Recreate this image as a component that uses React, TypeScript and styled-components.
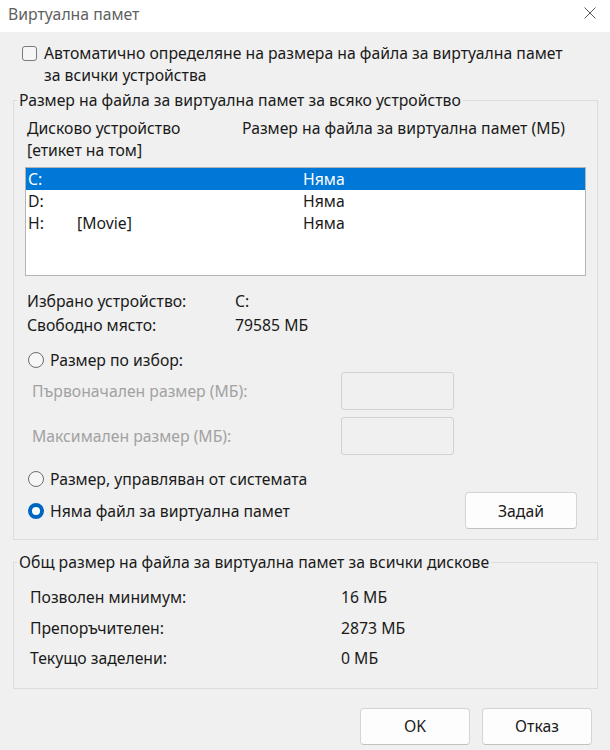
import styled, { createGlobalStyle } from "styled-components"

const GlobalStyle = createGlobalStyle`
  html, body {
    margin: 0;
    padding: 0;
    background: #f0f0f0;
  }
  body {
    font-family: "Segoe UI", "Noto Sans", "Open Sans", sans-serif;
  }
`

const drives = [
    { letter: "C:", label: "", size: "Няма" },
    { letter: "D:", label: "", size: "Няма" },
    { letter: "H:", label: "[Movie]", size: "Няма" },
]

const totals = [
    { name: "Позволен минимум:", value: "16 МБ" },
    { name: "Препоръчителен:", value: "2873 МБ" },
    { name: "Текущо заделени:", value: "0 МБ" },
]

const App = () => {
    return (
        <Window>
            <GlobalStyle />

            <TitleBar>
                <span>Виртуална памет</span>
                <CloseIcon width="12" height="12" viewBox="0 0 12 12">
                    <path d="M0.5 0.5 L11.5 11.5 M11.5 0.5 L0.5 11.5" stroke="#5a5a5a" strokeWidth="1" fill="none" />
                </CloseIcon>
            </TitleBar>

            <Content>
                <AutoRow>
                    <CheckBox />
                    <AutoText>
                        Автоматично определяне на размера на файла за виртуална памет
                        <br />
                        за всички устройства
                    </AutoText>
                </AutoRow>

                <Group>
                    <Legend>Размер на файла за виртуална памет за всяко устройство</Legend>

                    <Headers>
                        <span>
                            Дисково устройство
                            <br />
                            [етикет на том]
                        </span>
                        <span>Размер на файла за виртуална памет (МБ)</span>
                    </Headers>

                    <ListBox>
                        {drives.map((d, i) => (
                            <DriveRow key={d.letter} $selected={i === 0}>
                                <span>{d.letter}</span>
                                <span>{d.label}</span>
                                <span>{d.size}</span>
                            </DriveRow>
                        ))}
                    </ListBox>

                    <InfoList>
                        <InfoRow>
                            <span>Избрано устройство:</span>
                            <span>C:</span>
                        </InfoRow>
                        <InfoRow>
                            <span>Свободно място:</span>
                            <span>79585 МБ</span>
                        </InfoRow>
                    </InfoList>

                    <RadioRow $top={12}>
                        <Radio />
                        <span>Размер по избор:</span>
                    </RadioRow>

                    <SizeRow $top={1}>
                        <DisabledLabel>Първоначален размер (МБ):</DisabledLabel>
                        <SizeInput disabled />
                    </SizeRow>
                    <SizeRow $top={7}>
                        <DisabledLabel>Максимален размер (МБ):</DisabledLabel>
                        <SizeInput disabled />
                    </SizeRow>

                    <RadioRow $top={13}>
                        <Radio />
                        <span>Размер, управляван от системата</span>
                    </RadioRow>

                    <SetRow>
                        <RadioRow $top={0}>
                            <Radio $checked />
                            <span>Няма файл за виртуална памет</span>
                        </RadioRow>
                        <Button $width={112}>Задай</Button>
                    </SetRow>
                </Group>

                <TotalsGroup>
                    <Legend>Общ размер на файла за виртуална памет за всички дискове</Legend>
                    <TotalsList>
                        {totals.map((t) => (
                            <TotalRow key={t.name}>
                                <span>{t.name}</span>
                                <span>{t.value}</span>
                            </TotalRow>
                        ))}
                    </TotalsList>
                </TotalsGroup>

                <Footer>
                    <Button $width={110}>OK</Button>
                    <Button $width={110}>Отказ</Button>
                </Footer>
            </Content>
        </Window>
    )
}

const Window = styled.div`
    width: 610px;
    height: 750px;
    background: #f0f0f0;
    display: flex;
    flex-direction: column;
    font-size: 15.75px;
    line-height: 22px;
    color: #1a1a1a;
    overflow: hidden;
`

const TitleBar = styled.div`
    height: 32px;
    flex-shrink: 0;
    background: #ffffff;
    display: flex;
    align-items: flex-start;
    justify-content: space-between;
    box-sizing: border-box;
    padding: 3px 14px 0 8px;
    color: #5f5f5f;
`

const CloseIcon = styled.svg`
    margin-top: 4px;
`

const Content = styled.div`
    display: flex;
    flex-direction: column;
    padding: 0 12px 0 13px;
`

const AutoRow = styled.div`
    display: flex;
    align-items: flex-start;
    margin-top: 10px;
    padding-left: 9px;
`

const CheckBox = styled.span`
    width: 15px;
    height: 15px;
    box-sizing: border-box;
    border: 1px solid #7a7a7a;
    border-radius: 3px;
    background: #f6f6f6;
    margin-top: 4px;
    margin-right: 7px;
    flex-shrink: 0;
`

const AutoText = styled.div``

const Group = styled.fieldset`
    margin: 3px 0 0;
    border: 1px solid #dcdcdc;
    padding: 0 11px 10px;
    min-width: 0;
    display: flex;
    flex-direction: column;
`

const TotalsGroup = styled(Group)`
    margin-top: 11px;
    padding-bottom: 14px;
`

const Legend = styled.legend`
    padding: 0 2px;
    margin-left: -8px;
`

const Headers = styled.div`
    display: grid;
    grid-template-columns: 215px 1fr;
    margin-top: 6px;
    padding-left: 2px;
`

const ListBox = styled.div`
    margin-top: 6px;
    height: 109px;
    box-sizing: border-box;
    background: #ffffff;
    border: 1px solid #b4b4b4;
    display: flex;
    flex-direction: column;
`

const DriveRow = styled.div<{ $selected?: boolean }>`
    display: grid;
    grid-template-columns: 49px 226px 1fr;
    height: 22px;
    padding-left: 2px;
    background: ${(p) => (p.$selected ? "#0078d7" : "transparent")};
    color: ${(p) => (p.$selected ? "#ffffff" : "#1a1a1a")};
`

const InfoList = styled.div`
    margin-top: 13px;
    display: flex;
    flex-direction: column;
`

const InfoRow = styled.div`
    display: grid;
    grid-template-columns: 208px 1fr;
    height: 24px;
    align-items: center;
    padding-left: 2px;
`

const RadioRow = styled.div<{ $top: number }>`
    display: flex;
    align-items: center;
    height: 22px;
    margin-top: ${(p) => p.$top}px;
    padding-left: 3px;
    gap: 6px;
`

const Radio = styled.span<{ $checked?: boolean }>`
    width: 16px;
    height: 16px;
    box-sizing: border-box;
    border-radius: 50%;
    flex-shrink: 0;
    border: ${(p) => (p.$checked ? "4.5px solid #0067c0" : "1px solid #6e6e6e")};
    background: ${(p) => (p.$checked ? "#ffffff" : "#f6f6f6")};
`

const SizeRow = styled.div<{ $top: number }>`
    display: grid;
    grid-template-columns: 316px 113px;
    align-items: center;
    margin-top: ${(p) => p.$top}px;
`

const DisabledLabel = styled.span`
    color: #a2a2a2;
    padding-left: 7px;
`

const SizeInput = styled.input`
    height: 38px;
    box-sizing: border-box;
    border: 1px solid #d2d2d2;
    border-radius: 3px;
    background: #f0f0f0;
    margin: 0;
`

const SetRow = styled.div`
    display: flex;
    align-items: center;
    justify-content: space-between;
    margin-top: 2px;
    padding-right: 9px;
`

const Button = styled.button<{ $width: number }>`
    width: ${(p) => p.$width}px;
    height: 37px;
    box-sizing: border-box;
    background: #fdfdfd;
    border: 1px solid #d4d4d4;
    border-bottom-color: #c2c2c2;
    border-radius: 4px;
    font-family: inherit;
    font-size: 15.75px;
    color: #1a1a1a;
    padding: 0;
`

const TotalsList = styled.div`
    margin-top: 9px;
    display: flex;
    flex-direction: column;
`

const TotalRow = styled.div`
    display: grid;
    grid-template-columns: 311px 1fr;
    height: 30.5px;
    align-items: center;
    padding-left: 5px;
`

const Footer = styled.div`
    display: flex;
    justify-content: flex-end;
    gap: 12px;
    margin-top: 19px;
    padding-right: 6px;
`

export default App
